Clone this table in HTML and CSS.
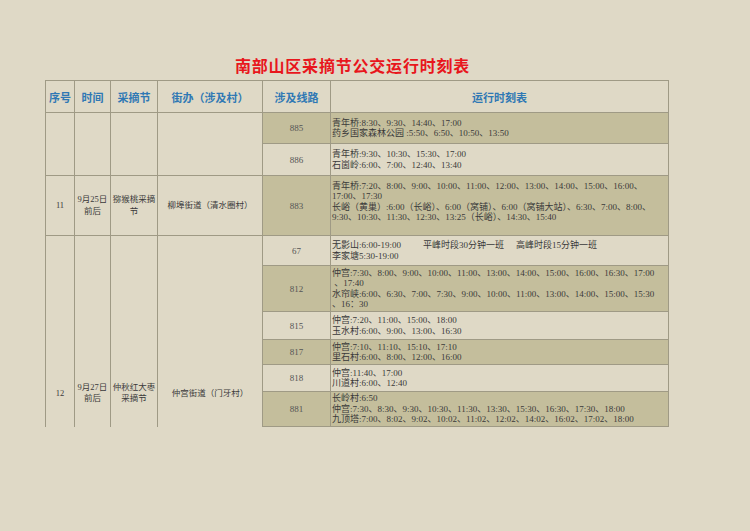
FILE: index.html
```html
<!DOCTYPE html>
<html lang="zh-CN">
<head>
<meta charset="utf-8">
<title>南部山区采摘节公交运行时刻表</title>
<link rel="stylesheet" href="styles.css">
</head>
<body>
<div class="page">
  <h1 class="title">南部山区采摘节公交运行时刻表</h1>
  <table class="timetable">
    <colgroup>
      <col class="c-no"><col class="c-date"><col class="c-fest"><col class="c-street"><col class="c-route"><col class="c-sched">
    </colgroup>
    <thead>
      <tr class="r-head">
        <th>序号</th><th>时间</th><th>采摘节</th><th>街办（涉及村）</th><th>涉及线路</th><th>运行时刻表</th>
      </tr>
    </thead>
    <tbody>
      <tr class="r-885">
        <td rowspan="2"></td><td rowspan="2"></td><td rowspan="2"></td><td rowspan="2"></td>
        <td class="route shade">885</td>
        <td class="sched shade">青年桥:8:30、9:30、14:40、17:00<br>药乡国家森林公园 :5:50、6:50、10:50、13:50</td>
      </tr>
      <tr class="r-886">
        <td class="route">886</td>
        <td class="sched">青年桥:9:30、10:30、15:30、17:00<br>石崮岭:6:00、7:00、12:40、13:40</td>
      </tr>
      <tr class="r-883">
        <td class="left">11</td>
        <td class="left">9月25日<br>前后</td>
        <td class="left">猕猴桃采摘<br>节</td>
        <td class="left">柳埠街道（清水圈村）</td>
        <td class="route shade">883</td>
        <td class="sched shade top">青年桥:7:20、8:00、9:00、10:00、11:00、12:00、13:00、14:00、15:00、16:00、<br>17:00、17:30<br>长峪（黄巢）:6:00（长峪）、6:00（窝铺）、6:00（窝铺大站）、6:30、7:00、8:00、<br>9:30、10:30、11:30、12:30、13:25（长峪）、14:30、15:40</td>
      </tr>
      <tr class="r-67">
        <td class="left low" rowspan="6">12</td>
        <td class="left low" rowspan="6">9月27日<br>前后</td>
        <td class="left low" rowspan="6">仲秋红大枣<br>采摘节</td>
        <td class="left low" rowspan="6">仲宫街道（门牙村）</td>
        <td class="route">67</td>
        <td class="sched">无影山:6:00-19:00<span class="gap1">平峰时段30分钟一班</span><span class="gap2">高峰时段15分钟一班</span><br>李家塘5:30-19:00</td>
      </tr>
      <tr class="r-812">
        <td class="route shade">812</td>
        <td class="sched shade">仲宫:7:30、8:00、9:00、10:00、11:00、13:00、14:00、15:00、16:00、16:30、17:00<br>&nbsp;、17:40<br>水帘峡:6:00、6:30、7:00、7:30、9:00、10:00、11:00、13:00、14:00、15:00、15:30<br>、16：30</td>
      </tr>
      <tr class="r-815">
        <td class="route">815</td>
        <td class="sched">仲宫:7:20、11:00、15:00、18:00<br>玉水村:6:00、9:00、13:00、16:30</td>
      </tr>
      <tr class="r-817">
        <td class="route shade">817</td>
        <td class="sched shade">仲宫:7:10、11:10、15:10、17:10<br>里石村:6:00、8:00、12:00、16:00</td>
      </tr>
      <tr class="r-818">
        <td class="route">818</td>
        <td class="sched">仲宫:11:40、17:00<br>川道村:6:00、12:40</td>
      </tr>
      <tr class="r-881">
        <td class="route shade">881</td>
        <td class="sched shade">长岭村:6:50<br>仲宫:7:30、8:30、9:30、10:30、11:30、13:30、15:30、16:30、17:30、18:00<br>九顶塔:7:00、8:02、9:02、10:02、11:02、12:02、14:02、16:02、17:02、18:00</td>
      </tr>
    </tbody>
  </table>
</div>
</body>
</html>
```
FILE: styles.css
```css
html, body {
  margin: 0;
  padding: 0;
  background: #dfd9c6;
}
body {
  width: 750px;
  height: 531px;
  overflow: hidden;
  font-family: "Liberation Serif", "Noto Sans CJK SC", serif;
  color: #333;
}
.page {
  padding: 55px 0 0 45px;
  width: 623px;
}
.title {
  margin: 0 0 5px 0;
  padding-right: 8px;
  font-family: "Noto Sans CJK SC", sans-serif;
  font-size: 16px;
  line-height: 20px;
  font-weight: 700;
  letter-spacing: 0.8px;
  color: #e8161c;
  text-align: center;
}
.timetable {
  border-collapse: collapse;
  table-layout: fixed;
  width: 623px;
}
.c-no { width: 29px; }
.c-date { width: 36px; }
.c-fest { width: 47px; }
.c-street { width: 105px; }
.c-route { width: 68px; }
.c-sched { width: 338px; }
.timetable th,
.timetable td {
  border: 1px solid #9f9a85;
  padding: 0;
  text-align: center;
  vertical-align: middle;
}
.timetable th {
  font-family: "Noto Sans CJK SC", sans-serif;
  font-size: 11px;
  font-weight: 700;
  color: #2f78b4;
  line-height: 14px;
}
.r-head { height: 32px; }
.r-885 { height: 31px; }
.r-886 { height: 32px; }
.r-883 { height: 60px; }
.r-67 { height: 30px; }
.r-812 { height: 46px; }
.r-815 { height: 28px; }
.r-817 { height: 25px; }
.r-818 { height: 27px; }
.r-881 { height: 35px; }
.shade { background: #c4be9c; }
.route {
  font-size: 9px;
  color: #555;
}
.sched {
  text-align: left !important;
  padding-left: 1px !important;
  font-size: 9px;
  line-height: 10.4px;
  white-space: nowrap;
  color: #3a3a3a;
}
.sched.top {
  vertical-align: top !important;
  padding-top: 5px !important;
}
.left {
  font-size: 8.5px;
  line-height: 11.5px;
  white-space: nowrap;
  color: #3a3a3a;
}
.low {
  padding-top: 124px !important;
  border-bottom-style: hidden !important;
}
.gap1 { margin-left: 22px; }
.gap2 { margin-left: 12px; }
```
